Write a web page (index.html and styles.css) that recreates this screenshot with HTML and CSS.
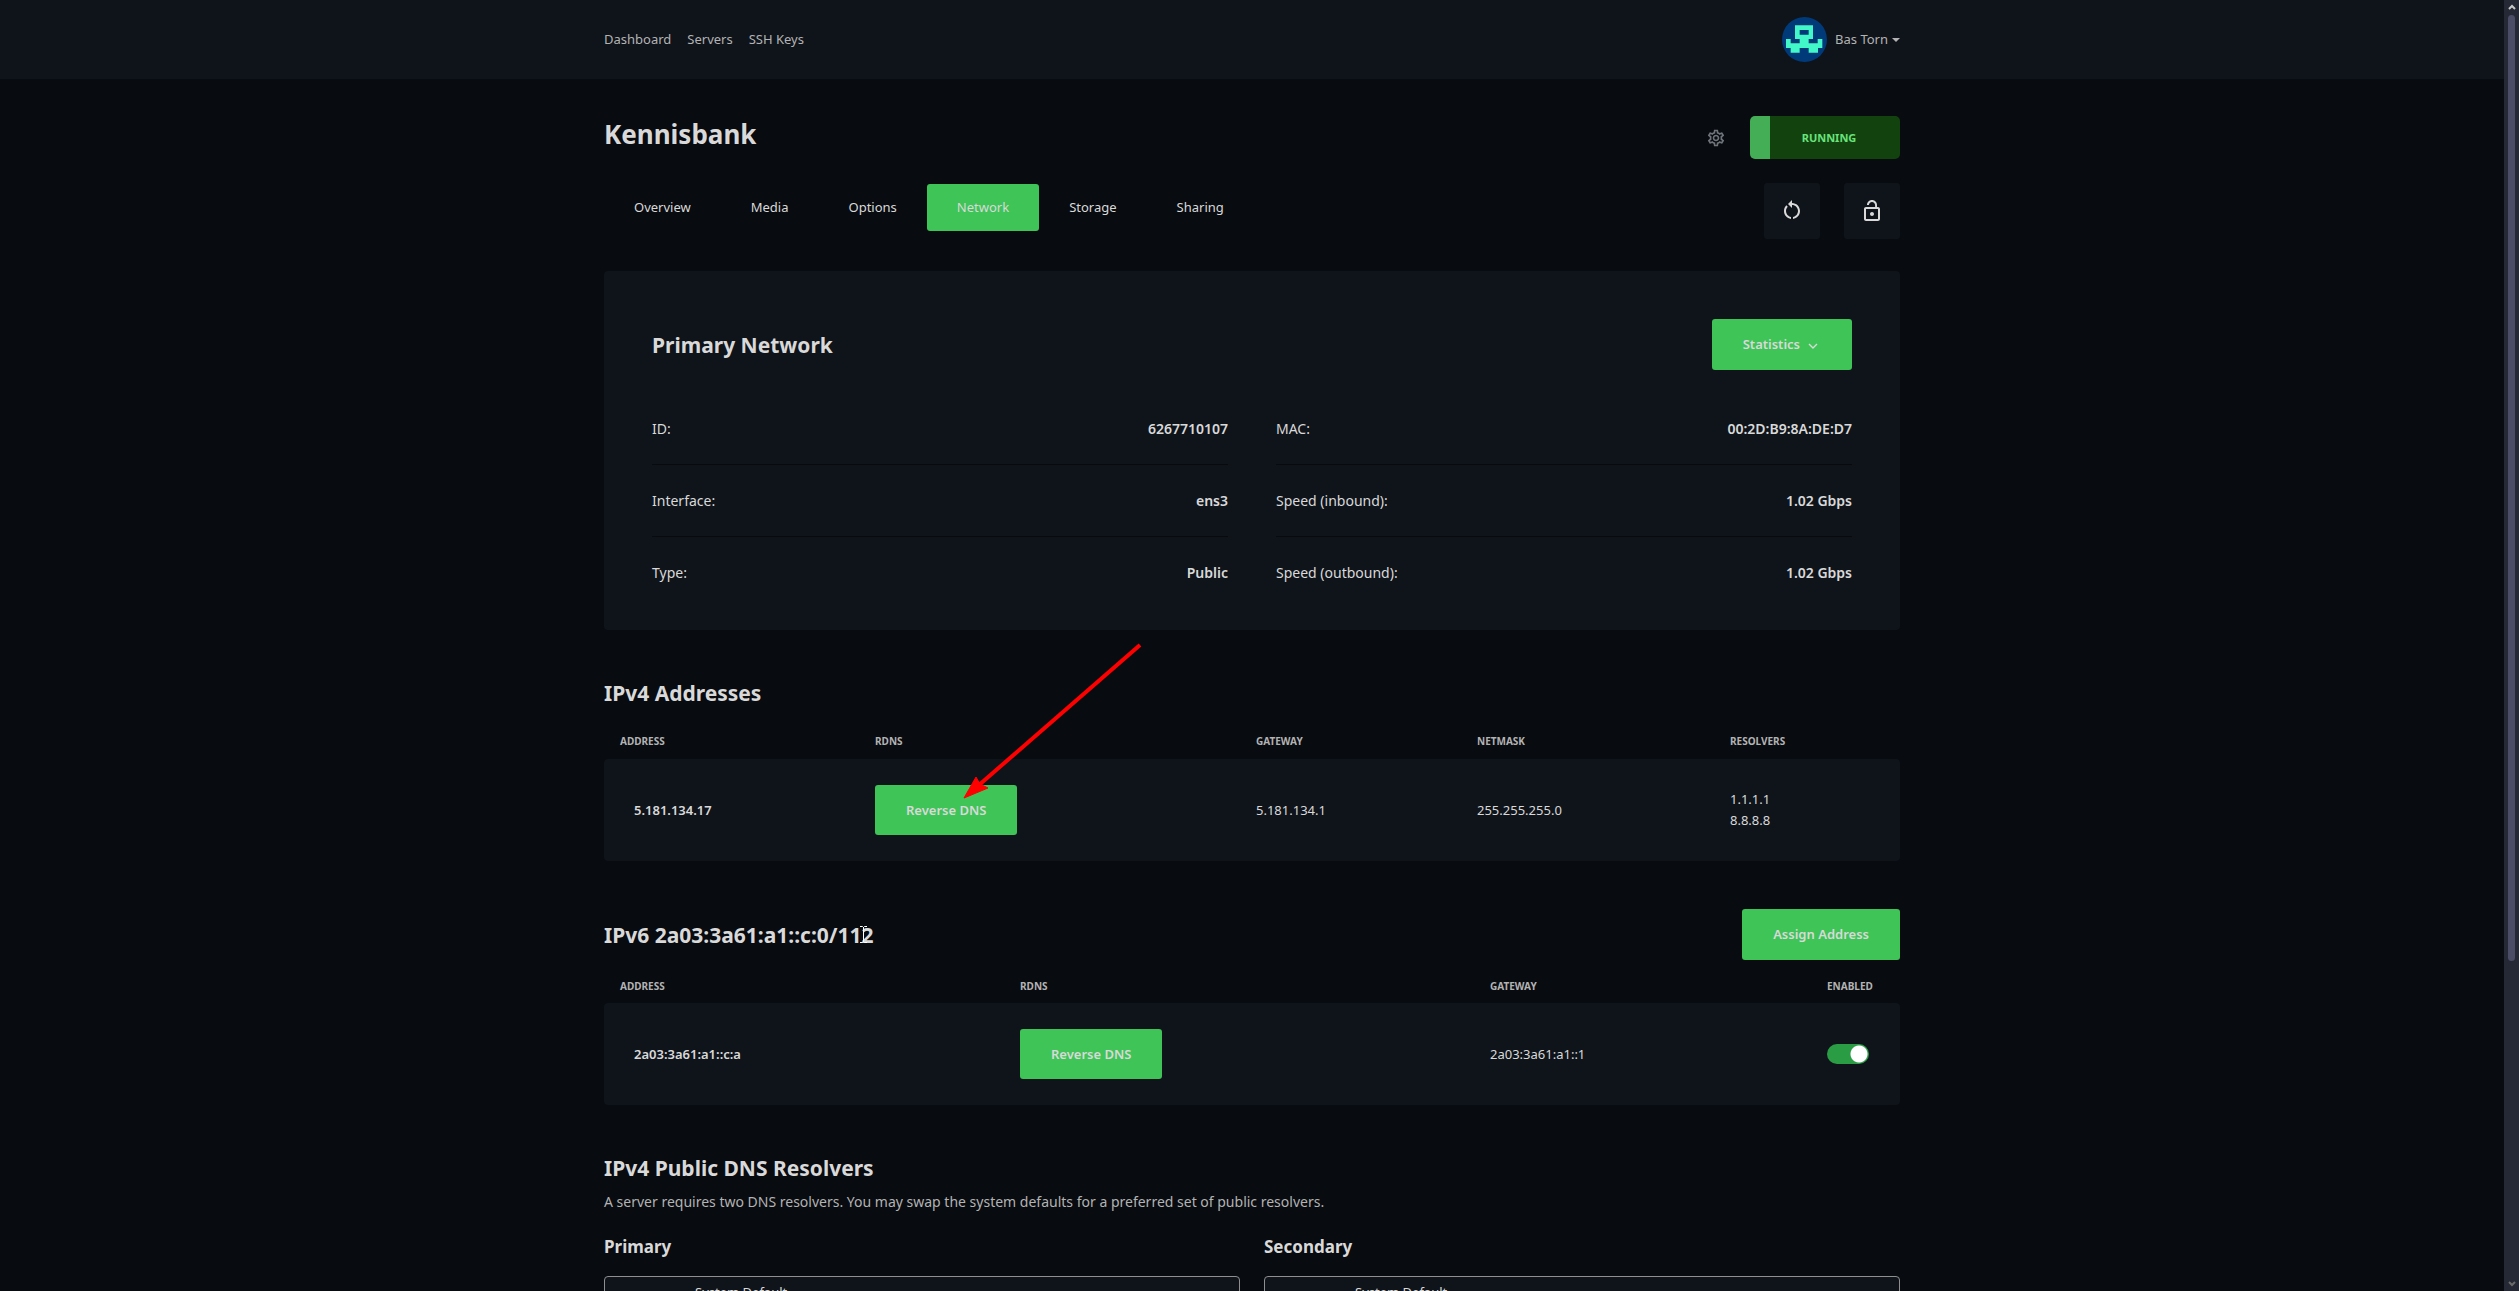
FILE: index.html
```html
<!DOCTYPE html>
<html lang="en">
<head>
<meta charset="utf-8">
<meta name="viewport" content="width=device-width, initial-scale=1">
<title>Kennisbank - Network</title>
<link rel="stylesheet" href="styles.css">
</head>
<body>
<div class="page">
  <header class="topbar">
    <div class="container topbar-inner">
      <nav class="nav" aria-label="Main">
        <a href="#">Dashboard</a>
        <a href="#">Servers</a>
        <a href="#">SSH Keys</a>
      </nav>
      <button class="user" type="button">
        <svg class="avatar" viewBox="0 0 135 135" aria-hidden="true">
          <circle cx="67.5" cy="67.5" r="67.5" fill="#003a79"/>
          <path fill="#43f8c8" fill-rule="evenodd" d="M39 25h54v41H80v13h27V66h14v27h-13v14H80V93H53v14H26V93H12V66h14v13h27V66H39zM53 39v14h27V39z"/>
        </svg>
        <span>Bas Torn</span>
        <span class="caret"></span>
      </button>
    </div>
  </header>

  <main class="container">
    <div class="title-row">
      <h1>Kennisbank</h1>
      <div class="status-group">
        <button class="gear" type="button" aria-label="Settings">
          <svg viewBox="0 0 24 24" width="20" height="20" aria-hidden="true"><path fill="currentColor" d="M19.43 12.98c.04-.32.07-.64.07-.98 0-.34-.03-.66-.07-.98l2.11-1.65c.19-.15.24-.42.12-.64l-2-3.46a.5.5 0 0 0-.61-.22l-2.49 1c-.52-.4-1.08-.73-1.69-.98l-.38-2.65A.488.488 0 0 0 14 2h-4c-.25 0-.46.18-.49.42l-.38 2.65c-.61.25-1.17.59-1.69.98l-2.49-1a.566.566 0 0 0-.18-.03c-.17 0-.34.09-.43.25l-2 3.46c-.13.22-.07.49.12.64l2.11 1.65c-.04.32-.07.65-.07.98 0 .33.03.66.07.98l-2.11 1.65c-.19.15-.24.42-.12.64l2 3.46a.5.5 0 0 0 .61.22l2.49-1c.52.4 1.08.73 1.69.98l.38 2.65c.03.24.24.42.49.42h4c.25 0 .46-.18.49-.42l.38-2.65c.61-.25 1.17-.59 1.69-.98l2.49 1c.06.02.12.03.18.03.17 0 .34-.09.43-.25l2-3.46c.12-.22.07-.49-.12-.64l-2.11-1.65zm-1.98-1.71c.04.31.05.52.05.73 0 .21-.02.43-.05.73l-.14 1.13.89.7 1.08.84-.7 1.21-1.27-.51-1.04-.42-.9.68c-.43.32-.84.56-1.25.73l-1.06.43-.16 1.13-.2 1.35h-1.4l-.19-1.35-.16-1.13-1.06-.43c-.43-.18-.83-.41-1.23-.71l-.91-.7-1.06.43-1.27.51-.7-1.21 1.08-.84.89-.7-.14-1.13c-.03-.31-.05-.54-.05-.74s.02-.43.05-.73l.14-1.13-.89-.7-1.08-.84.7-1.21 1.27.51 1.04.42.9-.68c.43-.32.84-.56 1.25-.73l1.06-.43.16-1.13.2-1.35h1.39l.19 1.35.16 1.13 1.06.43c.43.18.83.41 1.23.71l.91.7 1.06-.43 1.27-.51.7 1.21-1.07.85-.89.7.14 1.13zM12 8c-2.21 0-4 1.79-4 4s1.79 4 4 4 4-1.79 4-4-1.79-4-4-4zm0 6c-1.1 0-2-.9-2-2s.9-2 2-2 2 .9 2 2-.9 2-2 2z"/></svg>
        </button>
        <button class="status" type="button">RUNNING</button>
      </div>
    </div>

    <div class="tab-row">
      <nav class="tabs" aria-label="Server sections">
        <a href="#">Overview</a>
        <a href="#">Media</a>
        <a href="#">Options</a>
        <a href="#" class="active" aria-current="page">Network</a>
        <a href="#">Storage</a>
        <a href="#">Sharing</a>
      </nav>
      <div class="actions">
        <button class="icon-btn" type="button" aria-label="Restart">
          <svg viewBox="0 1 24 24" width="24" height="24" aria-hidden="true"><path fill="currentColor" d="M12 5V2L8 6l4 4V7c3.31 0 6 2.69 6 6 0 2.97-2.17 5.43-5 5.91v2.02c3.95-.49 7-3.85 7-7.93 0-4.42-3.58-8-8-8zm-6 8c0-1.65.67-3.15 1.76-4.24L6.34 7.34C4.9 8.79 4 10.79 4 13c0 4.08 3.05 7.44 7 7.93v-2.02c-2.83-.48-5-2.94-5-5.91z"/></svg>
        </button>
        <button class="icon-btn" type="button" aria-label="Unlock">
          <svg viewBox="0 0 24 24" width="24" height="24" aria-hidden="true"><path fill="currentColor" d="M12 17c1.1 0 2-.9 2-2s-.9-2-2-2-2 .9-2 2 .9 2 2 2zm6-9h-1V6c0-2.76-2.24-5-5-5S7 3.24 7 6h1.9c0-1.71 1.39-3.1 3.1-3.1 1.71 0 3.1 1.39 3.1 3.1v2H6c-1.1 0-2 .9-2 2v10c0 1.1.9 2 2 2h12c1.1 0 2-.9 2-2V10c0-1.1-.9-2-2-2zm0 12H6V10h12v10z"/></svg>
        </button>
      </div>
    </div>

    <section class="card">
      <div class="card-head">
        <h2>Primary Network</h2>
        <button class="btn" type="button">Statistics
          <svg class="chevron" viewBox="0 0 10 6" aria-hidden="true"><path d="M1 1l4 4 4-4" fill="none" stroke="currentColor" stroke-width="1.4"/></svg>
        </button>
      </div>
      <div class="facts">
        <dl>
          <div><dt>ID:</dt><dd>6267710107</dd></div>
          <div><dt>Interface:</dt><dd>ens3</dd></div>
          <div><dt>Type:</dt><dd>Public</dd></div>
        </dl>
        <dl>
          <div><dt>MAC:</dt><dd>00:2D:B9:8A:DE:D7</dd></div>
          <div><dt>Speed (inbound):</dt><dd>1.02 Gbps</dd></div>
          <div><dt>Speed (outbound):</dt><dd>1.02 Gbps</dd></div>
        </dl>
      </div>
    </section>

    <section class="block">
      <div class="block-head"><h2>IPv4 Addresses</h2></div>
      <table class="grid ipv4">
        <thead><tr><th>Address</th><th>RDNS</th><th>Gateway</th><th>Netmask</th><th>Resolvers</th></tr></thead>
        <tbody><tr>
          <td>5.181.134.17</td>
          <td><span class="pointed"><button class="btn" type="button">Reverse DNS</button>
            <svg class="arrow" viewBox="0 0 184 160" aria-hidden="true"><path d="M179 4L18 144" stroke="#f00" stroke-width="4"/><path d="M3 157l12-21 4 7 8 4z" fill="#f00" stroke="#f00"/></svg></span></td>
          <td>5.181.134.1</td>
          <td>255.255.255.0</td>
          <td>1.1.1.1<br>8.8.8.8</td>
        </tr></tbody>
      </table>
    </section>

    <section class="block">
      <div class="block-head with-button">
        <h2>IPv6 2a03:3a61:a1::c:0/112<svg class="ibeam" viewBox="0 0 7 17" aria-hidden="true"><path d="M0 .5h2.5l1 1 1-1H7M3.500 1v15M0 16.5h2.5l1-1 1 1H7" fill="none" stroke="#fff"/></svg></h2>
        <button class="btn" type="button">Assign Address</button>
      </div>
      <table class="grid ipv6">
        <thead><tr><th>Address</th><th>RDNS</th><th>Gateway</th><th>Enabled</th></tr></thead>
        <tbody><tr>
          <td>2a03:3a61:a1::c:a</td>
          <td><button class="btn" type="button">Reverse DNS</button></td>
          <td>2a03:3a61:a1::1</td>
          <td><input class="switch" type="checkbox" role="switch" aria-label="Enabled" checked></td>
        </tr></tbody>
      </table>
    </section>

    <section class="resolvers">
      <h2>IPv4 Public DNS Resolvers</h2>
      <p>A server requires two DNS resolvers. You may swap the system defaults for a preferred set of public resolvers.</p>
      <div class="selects">
        <div>
          <label for="primary">Primary</label>
          <select id="primary"><option>System Default</option></select>
        </div>
        <div>
          <label for="secondary">Secondary</label>
          <select id="secondary"><option>System Default</option></select>
        </div>
      </div>
    </section>
  </main>
</div>
<div class="scrollbar" aria-hidden="true">
  <svg viewBox="0 0 8 8"><path d="M1 6l3-3 3 3" fill="none" stroke="#c8c8c8" stroke-width="2"/></svg>
  <div class="track"><div class="thumb"></div></div>
  <svg viewBox="0 0 8 8"><path d="M1 2l3 3 3-3" fill="none" stroke="#6a6a6a" stroke-width="2"/></svg>
</div>
</body>
</html>
```
FILE: styles.css
```css
* { box-sizing: border-box; }

:root {
  --bg: #080b10;
  --panel: #0f141b;
  --green: #3ec457;
  --text: #d9d9d9;
  --muted: #b3b3b3;
}

body {
  margin: 0;
  height: 100vh;
  overflow: hidden;
  display: grid;
  grid-template-columns: 1fr 15px;
  background: var(--bg);
  color: var(--text);
  font: 13px/21px "Noto Sans", "Open Sans", sans-serif;
}

a { color: inherit; text-decoration: none; }
button { font: inherit; color: inherit; background: none; border: 0; padding: 0; }
h1, h2, p, dl, dd { margin: 0; }
svg { display: block; }

.page { height: 100vh; overflow: hidden; min-width: 0; }
.container { width: 100%; max-width: 1296px; margin: 0 auto; }

.topbar { background: var(--panel); color: var(--muted); }
.topbar-inner { height: 79px; display: flex; align-items: center; justify-content: space-between; }
.nav { display: flex; gap: 16px; }
.user { display: flex; align-items: center; }
.avatar { width: 45px; height: 45px; margin-right: 8px; }
.caret { margin-left: 4px; border: 4px solid transparent; border-top-color: currentColor; border-bottom: 0; }

.title-row { display: flex; justify-content: space-between; align-items: flex-start; padding-top: 37px; }
h1 { font-size: 26px; line-height: 37px; font-weight: 700; }
h2 { font-size: 21px; line-height: 30px; font-weight: 700; }
.status-group { display: flex; align-items: center; gap: 24px; }
.gear { color: #6f747b; }
.status {
  width: 150px;
  height: 43px;
  border-radius: 5px;
  background: linear-gradient(90deg, #44ae57 20px, #12420d 20px);
  color: #69e37c;
  font-size: 11px;
  font-weight: 700;
  padding-left: 8px;
}

.tab-row { display: flex; justify-content: space-between; align-items: flex-start; padding-top: 24px; }
.tabs { display: flex; padding-top: 1px; }
.tabs a { padding: 13px 30px; border-radius: 3px; }
.tabs .active { background: var(--green); }
.actions { display: flex; gap: 24px; }
.icon-btn { width: 56px; height: 56px; border-radius: 3px; background: var(--panel); display: grid; place-items: center; }

.card { margin-top: 32px; padding: 48px 48px 46px; background: var(--panel); border-radius: 4px; }
.card-head { display: flex; justify-content: space-between; align-items: center; margin-bottom: 47px; }
.btn { height: 50px; padding: 0 31px; border-radius: 3px; background: var(--green); font-weight: 600; white-space: nowrap; }
.card-head .btn, .with-button .btn { height: 51px; }
.card-head .btn { display: flex; align-items: center; gap: 8px; }
.chevron { width: 10px; height: 6px; margin: 2px 3px 0 0; }

.facts { display: grid; grid-template-columns: 1fr 1fr; gap: 48px; font-size: 14px; line-height: 23px; }
.facts dl > div { display: flex; justify-content: space-between; }
.facts dl > div + div { border-top: 1px solid #080a0d; margin-top: 24px; padding-top: 24px; }
.facts dd { font-weight: 600; }

.block { padding-top: 48px; }
.block-head { display: flex; justify-content: space-between; align-items: center; }
.grid { width: 100%; table-layout: fixed; border-collapse: separate; border-spacing: 0; }
.grid th { height: 51px; padding: 15px 0 0; text-align: left; font-size: 10px; line-height: 14px; font-weight: 700; text-transform: uppercase; color: var(--muted); }
.with-button + .grid th { height: 43px; padding-top: 9px; }
.grid th:first-child { padding-left: 16px; }
.grid td { height: 102px; padding: 0; background: var(--panel); vertical-align: middle; }
.grid td:first-child { padding-left: 30px; font-weight: 600; border-radius: 4px 0 0 4px; }
.grid td:last-child { border-radius: 0 4px 4px 0; }
.ipv4 th:nth-child(1) { width: 271px; }
.ipv4 th:nth-child(2) { width: 381px; }
.ipv4 th:nth-child(3) { width: 221px; }
.ipv4 th:nth-child(4) { width: 253px; }
.ipv6 th:nth-child(1) { width: 416px; }
.ipv6 th:nth-child(2) { width: 470px; }
.ipv6 th:nth-child(3) { width: 337px; }

.pointed { position: relative; display: inline-block; }
.arrow { position: absolute; left: 86px; bottom: 34px; width: 184px; height: 160px; pointer-events: none; }
.with-button h2 { position: relative; }
.ibeam { position: absolute; right: 7px; top: 6px; width: 7px; height: 17px; }

.switch { appearance: none; display: block; width: 42px; height: 20px; margin: 0; border-radius: 10px; background: radial-gradient(circle at 32px 10px, #fff 8px, #2a9d44 9px); }

.resolvers { padding-top: 48px; }
.resolvers p { font-size: 14px; line-height: 23px; padding-top: 7px; color: var(--muted); }
.selects { display: grid; grid-template-columns: 1fr 1fr; gap: 24px; padding-top: 20px; }
.selects label { display: block; font-size: 17px; line-height: 28px; font-weight: 700; margin-bottom: 15px; }
.selects select { appearance: none; display: block; width: 100%; height: 33px; padding: 0 90px; font: inherit; color: inherit; background: var(--panel); border: 1px solid #8f8f8f; border-radius: 4px; }

.scrollbar { display: flex; flex-direction: column; align-items: center; background: #252935; padding: 3px 0; }
.scrollbar svg { width: 8px; height: 8px; }
.track { flex: 1; width: 7px; padding: 4px 0; }
.thumb { height: 75%; border-radius: 4px; background: #4b4c66; }
```
